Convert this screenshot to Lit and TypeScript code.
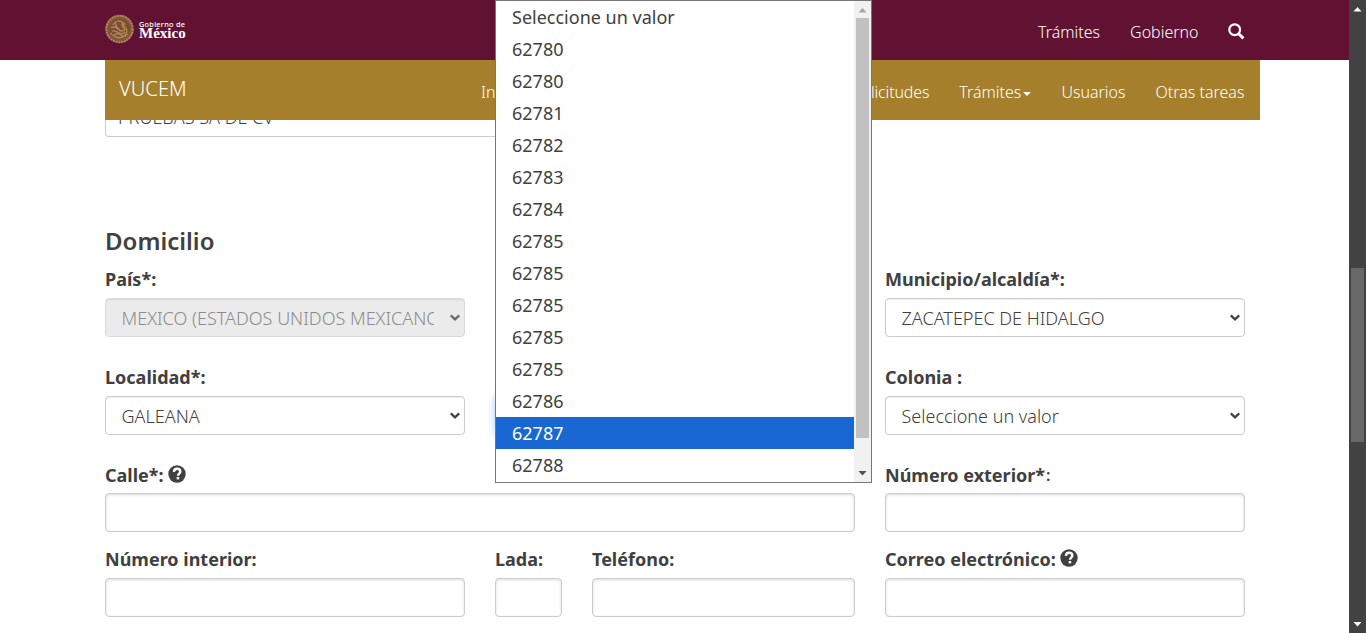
import { LitElement, html, css, nothing } from "lit";
import { customElement, property } from "lit/decorators.js";

@customElement("help-icon")
class HelpIcon extends LitElement {
  static styles = css`
    :host { display: inline-block; width: 18px; height: 18px; }
    svg { display: block; }
  `;
  render() {
    return html`<svg width="18" height="18" viewBox="0 0 18 18">
      <circle cx="9" cy="9" r="8.7" fill="#404041" />
      <path d="M5.9 6.9C6 4.7 7.2 3.8 9.1 3.8c2 0 3.2 1 3.2 2.7 0 2.2-2.3 2.2-2.3 4.3" fill="none" stroke="#fff" stroke-width="2.4" />
      <rect x="8.7" y="12" width="2.5" height="2.4" fill="#fff" />
    </svg>`;
  }
}

@customElement("form-field")
class FormField extends LitElement {
  @property() label = "";
  @property() suffix = "";
  @property() kind = "input";
  @property() value = "";
  @property({ type: Boolean }) help = false;
  static styles = css`
    :host { display: block; min-width: 0; }
    .label { display: flex; align-items: center; height: 22px; padding-bottom: 2px; margin-bottom: 6px; font-size: 18px; font-weight: 700; line-height: 22px; white-space: nowrap; color: #404041; }
    :host(.tight) .label { margin-bottom: 5px; }
    .suffix { font-size: 16px; font-weight: 600; margin-left: 1px; }
    help-icon { margin-left: 4.5px; position: relative; top: -1px; }
    .box { box-sizing: border-box; height: 39px; display: flex; align-items: center; border: 1px solid #ccc; border-radius: 4px; background: #fff; box-shadow: inset 0 1px 1px rgba(0, 0, 0, 0.075); padding: 0 3px 0 15.5px; color: #404041; font-size: 18px; font-weight: 300; }
    .input { box-shadow: inset 0 1px 3px rgba(0, 0, 0, 0.15); }
    .disabled { background: #ebebeb; border-color: #dadada; color: #8b8b8b; }
    .disabled svg { opacity: 0.75; }
    .focus { border-color: #66afe9; box-shadow: 0 0 8px rgba(102, 175, 233, 0.6); }
    .value { flex: 1; min-width: 0; overflow: hidden; white-space: nowrap; margin-right: 15px; line-height: 26px; padding-top: 1px; }
    svg { flex: none; }
  `;
  render() {
    return html`
      <div class="label"><span>${this.label}</span>${this.suffix ? html`<span class="suffix">${this.suffix}</span>` : nothing}${this.help ? html`<help-icon></help-icon>` : nothing}</div>
      <div class="box ${this.kind}">
        ${this.kind === "input" ? nothing : html`<span class="value">${this.value}</span>
          <svg width="12" height="8" viewBox="0 0 12 8"><path d="M1.8 1.4 6 5.4l4.2-4" fill="none" stroke="#404041" stroke-width="2.2" /></svg>`}
      </div>`;
  }
}

@customElement("scroll-bar")
class ScrollBar extends LitElement {
  static styles = css`
    :host { display: flex; flex-direction: column; width: 17px; box-sizing: border-box; background: #424242; --thumb: #686868; }
    :host(.light) { background: #f1f1f1; --thumb: #c1c1c1; }
    svg { display: block; flex: none; }
    .up { fill: var(--up, #fff); }
    .down { fill: var(--down, #fff); }
    .track { flex: 1; padding: var(--offset) 2px 0; }
    .thumb { height: var(--length); background: var(--thumb); }
  `;
  render() {
    return html`
      <svg class="up" width="17" height="17" viewBox="0 0 17 17"><path d="M4.5 11.5 8.5 7l4 4.5z" /></svg>
      <div class="track"><div class="thumb"></div></div>
      <svg class="down" width="17" height="17" viewBox="0 0 17 17"><path d="M4.5 6 8.5 10.5l4-4.5z" /></svg>`;
  }
}

@customElement("app-root")
class AppRoot extends LitElement {
  options = ["Seleccione un valor", "62780", "62780", "62781", "62782", "62783", "62784", "62785", "62785", "62785", "62785", "62785", "62786", "62787", "62788"];

  static styles = css`
    :host { display: flex; position: relative; width: 1366px; height: 633px; overflow: hidden; font-family: "Noto Sans", "Open Sans", sans-serif; color: #404041; background: #fff; }
    .page { flex: 1; min-width: 0; }
    .header { height: 60px; box-sizing: border-box; padding: 0 104px 0 105px; background: #611232; display: flex; align-items: center; color: #fff; font-weight: 300; }
    .logo { display: flex; align-items: center; gap: 5px; margin-top: -2px; }
    .seal { display: block; }
    .gov { font-family: "Noto Sans", sans-serif; font-size: 7.4px; line-height: 8px; font-weight: 500; letter-spacing: 0.22px; }
    .mexico { display: block; font-family: "Liberation Serif", serif; font-size: 15px; line-height: 10px; font-weight: 700; letter-spacing: 0; }
    .links { margin-left: auto; display: flex; align-items: center; gap: 30px; font-size: 16px; padding-top: 4px; }
    .links svg { display: block; margin: -2px 0 0 -0.5px; }
    .nav { height: 60px; box-sizing: border-box; margin: 0 89px 0 105px; padding: 0 15.6px 0 14px; background: #a57f2c; color: #fff; display: flex; align-items: center; font-weight: 300; position: relative; }
    .brand { width: 362px; font-size: 20.2px; padding-bottom: 4px; }
    .item { font-size: 16px; padding-top: 4px; }
    .dense { letter-spacing: -0.15px; }
    .right { margin-left: auto; display: flex; gap: 30px; }
    .caret { display: inline-block; border: 4px solid transparent; border-top-color: #fff; border-bottom: 0; vertical-align: middle; margin-left: 2px; }
    .main { padding: 0 104px 0 105px; }
    .company { height: 17px; box-sizing: border-box; width: 750px; border: 1px solid #ccc; border-top: 0; border-radius: 0 0 4px 4px; overflow: hidden; display: flex; align-items: flex-end; padding: 0 12px 6px; font-size: 18px; line-height: 26px; font-weight: 300; }
    .title { margin: 87px 0 0; font-size: 24px; line-height: 34px; font-weight: 600; }
    .grid { display: grid; grid-template-columns: 360px 67px 263px 360px; column-gap: 30px; padding-top: 10px; }
    form-field { margin-bottom: 29px; }
    .tight { margin-bottom: 16px; }
    .two { grid-column: span 2; }
    .three { grid-column: span 3; }
    .popup { position: absolute; left: 495px; top: 0; width: 377px; height: 483px; box-sizing: border-box; border: 1px solid #767676; background: #fff; display: flex; }
    .list { flex: 1; overflow: hidden; font-size: 18px; }
    .option { height: 32px; line-height: 32px; padding-left: 16px; }
    .selected { background: #1967d2; color: #fff; }
    .light { --up: #a3a3a3; --down: #505050; --offset: 0px; --length: 420px; }
    .browser { --offset: 251px; --length: 174px; }
  `;

  render() {
    return html`
      <div class="page">
        <header class="header">
          <div class="logo">
            <svg class="seal" width="29" height="30" viewBox="0 0 29 30" fill="none" stroke="#b08b50">
              <circle cx="14.5" cy="15" r="12.5" fill="#7c4c3a" stroke="none" />
              <circle cx="14.5" cy="15" r="13.2" stroke-width="2" stroke-dasharray="2.4 .4" />
              <circle cx="14.5" cy="15" r="11.3" stroke="#8b6440" stroke-width="1.4" stroke-dasharray="1 .7" />
              <path d="M8 11c2-4 6-5 9-3l3 2-3 1c4 2 6 5 4 9-3 4-8 5-12 2M6 14c3-2 5-1 7 1s4 3 7 1M7 17c3-1 4 1 7 2s4 1 6-1M11 9c-1 3 1 5 4 7M9 21c3-2 6-1 9 1M17 9c0 3 1 5 3 7" stroke-width="1.3" />
              <path d="M6 19c2 5 13 7 17 0" stroke-width="1.6" stroke-dasharray="1.6 .6" />
            </svg>
            <div class="gov">Gobierno de<span class="mexico">México</span></div>
          </div>
          <nav class="links">
            <span>Trámites</span><span>Gobierno</span>
            <svg width="17" height="17" viewBox="0 0 17 17" fill="none" stroke="#fff"><circle cx="6.7" cy="6.7" r="5.4" stroke-width="2.2" /><path d="m10.7 10.7 4.7 4.7" stroke-width="3" /></svg>
          </nav>
        </header>
        <nav class="nav">
          <span class="brand">VUCEM</span>
          <span class="item">Inicio</span>
          <div class="right">
            <span class="item dense">Solicitudes</span>
            <span class="item">Trámites<i class="caret"></i></span>
            <span class="item">Usuarios</span>
            <span class="item">Otras tareas</span>
          </div>
        </nav>
        <main class="main">
          <div class="company">PRUEBAS SA DE CV</div>
          <h2 class="title">Domicilio</h2>
          <div class="grid">
            <form-field label="País*:" kind="disabled" value="MEXICO (ESTADOS UNIDOS MEXICANOS)"></form-field>
            <form-field class="two" kind="select"></form-field>
            <form-field label="Municipio/alcaldía*:" kind="select" value="ZACATEPEC DE HIDALGO"></form-field>
            <form-field label="Localidad*:" kind="select" value="GALEANA"></form-field>
            <form-field class="two" kind="focus"></form-field>
            <form-field label="Colonia :" kind="select" value="Seleccione un valor"></form-field>
            <form-field class="three tight" label="Calle*:" help></form-field>
            <form-field class="tight" label="Número exterior*" suffix=":"></form-field>
            <form-field label="Número interior:"></form-field>
            <form-field label="Lada:"></form-field>
            <form-field label="Teléfono:"></form-field>
            <form-field label="Correo electrónico:" help></form-field>
          </div>
        </main>
      </div>
      <scroll-bar class="browser"></scroll-bar>
      <div class="popup">
        <div class="list">${this.options.map((o, i) => html`<div class="option ${i === 13 ? "selected" : ""}">${o}</div>`)}</div>
        <scroll-bar class="light"></scroll-bar>
      </div>`;
  }
}
